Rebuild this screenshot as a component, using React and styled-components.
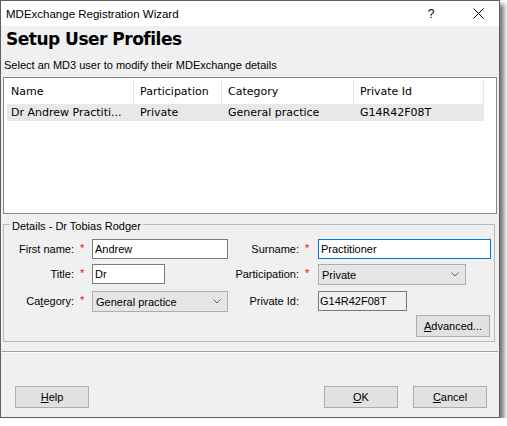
import React from 'react'
import styled, { createGlobalStyle } from 'styled-components'

const UI = '"Liberation Sans", Arial, sans-serif'
const LIST = '"DejaVu Sans", Verdana, sans-serif'

const GlobalStyle = createGlobalStyle`
  html, body {
    margin: 0;
    padding: 0;
    background: #fff;
  }

  body {
    font-family: ${UI};
    font-size: 11px;
    color: #000;
  }

  * {
    box-sizing: border-box;
  }
`

const Window = styled.div`
  width: 500px;
  height: 418px;
  display: flex;
  flex-direction: column;
  background: #f0f0f0;
  border: 1px solid #5f5f5f;
  box-shadow: 4px 4px 5px rgba(0, 0, 0, 0.55);
`

const TitleBar = styled.div`
  height: 25px;
  display: flex;
  align-items: center;
  background: #fff;
  padding-left: 5px;
  font-size: 11.5px;
`

const TitleText = styled.div`
  flex: 1;
`

const CaptionButton = styled.div`
  width: 46px;
  height: 25px;
  display: flex;
  align-items: center;
  justify-content: center;
  padding-left: ${(p) => p.$shift ?? 0}px;
  font-size: 12px;
`

const Heading = styled.h1`
  margin: 0;
  padding: 3px 0 0 5px;
  font-family: ${LIST};
  font-weight: 700;
  font-size: 17px;
  letter-spacing: -0.5px;
  line-height: 20px;
`

const Subtitle = styled.div`
  margin-top: 10px;
  padding-left: 3px;
  line-height: 13px;
`

const ListBox = styled.div`
  margin: 5px 2px 0;
  height: 137px;
  background: #fff;
  border: 1px solid #828790;
  font-family: ${LIST};
  font-size: 11px;
`

const COLS = [130, 88, 132, 130]

const ListHeader = styled.div`
  display: grid;
  grid-template-columns: ${COLS.map((c) => c + 'px').join(' ')};
  height: 26px;
`

const HeaderCell = styled.div`
  margin-top: 2px;
  height: 24px;
  line-height: 24px;
  padding-left: ${(p) => (p.$first ? 7 : 6)}px;
  border-right: 1px solid #e5e5e5;
  white-space: nowrap;
`

const ListRow = styled.div`
  display: grid;
  grid-template-columns: ${COLS.map((c, i) => (i === 0 ? c - 3 : c) + 'px').join(' ')};
  margin-left: 3px;
  width: 477px;
  height: 17px;
  line-height: 17px;
  background: ${(p) => (p.$selected ? '#e8e8e8' : 'transparent')};
`

const RowCell = styled.div`
  padding-left: ${(p) => (p.$first ? 4 : 6)}px;
  white-space: nowrap;
  overflow: hidden;
`

const GroupBox = styled.div`
  position: relative;
  margin: 10px 4px 0 2px;
  height: 118px;
  border: 1px solid #b9b9b9;
  padding: 14px 0 4px 0;
`

const GroupCaption = styled.div`
  position: absolute;
  left: 6px;
  top: -5px;
  padding: 0 2px;
  line-height: 13px;
  background: #f0f0f0;
`

const FormGrid = styled.div`
  display: grid;
  grid-template-columns: 70px 18px 136px 71px 19px 173px;
  grid-template-rows: 25px 27px 24px 22px;
  align-items: start;
`

const Label = styled.div`
  text-align: right;
  line-height: 20px;
  white-space: nowrap;
`

const Required = styled.div`
  color: #ff0000;
  padding-left: 6px;
  line-height: 18px;
`

const TextBox = styled.input`
  display: block;
  width: ${(p) => p.$width}px;
  height: 20px;
  margin: 0;
  padding: 0 0 0 ${(p) => p.$pad ?? 2}px;
  border: 1px solid ${(p) => (p.$focused ? '#0078d7' : '#7a7a7a')};
  background: ${(p) => (p.$readOnly ? '#f0f0f0' : '#fff')};
  font-family: ${UI};
  font-size: 11px;
  color: #000;
  outline: none;
`

const ComboBox = styled.div`
  width: ${(p) => p.$width}px;
  height: 21px;
  display: flex;
  align-items: center;
  justify-content: space-between;
  padding: 0 6px 0 3px;
  border: 1px solid #adadad;
  background: #e5e5e5;
`

const Button = styled.div`
  width: 74px;
  height: 22px;
  display: flex;
  align-items: center;
  justify-content: center;
  border: 1px solid #adadad;
  background: #e1e1e1;
  grid-column: ${(p) => p.$col ?? 'auto'};
  justify-self: end;
  margin-right: ${(p) => p.$mr ?? 0}px;
`

const Separator = styled.div`
  margin: 9px 1px 0;
  height: 2px;
  border-top: 1px solid #a0a0a0;
  border-bottom: 1px solid #fff;
`

const ButtonRow = styled.div`
  margin-top: auto;
  display: flex;
  align-items: center;
  gap: 15px;
  padding: 0 12px 9px 14px;

  > :first-child {
    margin-right: auto;
  }
`

const CloseIcon = () => (
  <svg width="11" height="11" viewBox="0 0 11 11">
    <path d="M0.5 0.5 L10.5 10.5 M10.5 0.5 L0.5 10.5" stroke="#000" strokeWidth="1" fill="none" />
  </svg>
)

const Chevron = () => (
  <svg width="8" height="5" viewBox="0 0 8 5">
    <polyline points="0.5,0.5 4,4 7.5,0.5" stroke="#606060" strokeWidth="1" fill="none" />
  </svg>
)

const Combo = ({ value, width }) => (
  <ComboBox $width={width}>
    <span>{value}</span>
    <Chevron />
  </ComboBox>
)

const users = [
  {
    name: 'Dr Andrew Practiti...',
    participation: 'Private',
    category: 'General practice',
    privateId: 'G14R42F08T',
  },
]

export default function App() {
  return (
    <>
      <GlobalStyle />
      <Window>
        <TitleBar>
          <TitleText>MDExchange Registration Wizard</TitleText>
          <CaptionButton $shift={2}>?</CaptionButton>
          <CaptionButton $shift={4}>
            <CloseIcon />
          </CaptionButton>
        </TitleBar>

        <Heading>Setup User Profiles</Heading>
        <Subtitle>Select an MD3 user to modify their MDExchange details</Subtitle>

        <ListBox>
          <ListHeader>
            <HeaderCell $first>Name</HeaderCell>
            <HeaderCell>Participation</HeaderCell>
            <HeaderCell>Category</HeaderCell>
            <HeaderCell>Private Id</HeaderCell>
          </ListHeader>
          {users.map((u) => (
            <ListRow key={u.privateId} $selected>
              <RowCell $first>{u.name}</RowCell>
              <RowCell>{u.participation}</RowCell>
              <RowCell>{u.category}</RowCell>
              <RowCell>{u.privateId}</RowCell>
            </ListRow>
          ))}
        </ListBox>

        <GroupBox>
          <GroupCaption>Details - Dr Tobias Rodger</GroupCaption>
          <FormGrid>
            <Label>First name:</Label>
            <Required>*</Required>
            <TextBox $width={136} defaultValue="Andrew" readOnly />
            <Label>Surname:</Label>
            <Required>*</Required>
            <TextBox $width={173} $focused defaultValue="Practitioner" readOnly />

            <Label>Title:</Label>
            <Required>*</Required>
            <TextBox $width={73} defaultValue="Dr" readOnly />
            <Label>Participation:</Label>
            <Required>*</Required>
            <Combo width={148} value="Private" />

            <Label>
              Ca<u>t</u>egory:
            </Label>
            <Required>*</Required>
            <Combo width={136} value="General practice" />
            <Label>Private Id:</Label>
            <span />
            <TextBox $width={89} $readOnly $pad={1} defaultValue="G14R42F08T" readOnly />

            <Button $col={6} $mr={1}>
              <span>
                <u>A</u>dvanced...
              </span>
            </Button>
          </FormGrid>
        </GroupBox>

        <Separator />

        <ButtonRow>
          <Button>
            <span>
              <u>H</u>elp
            </span>
          </Button>
          <Button>
            <span>
              <u>O</u>K
            </span>
          </Button>
          <Button>
            <span>
              <u>C</u>ancel
            </span>
          </Button>
        </ButtonRow>
      </Window>
    </>
  )
}
